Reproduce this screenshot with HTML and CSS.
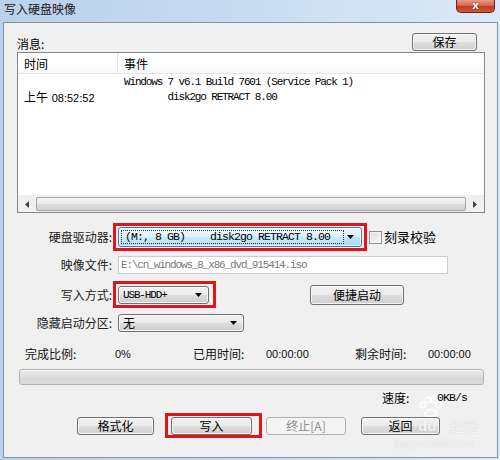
FILE: index.html
```html
<!DOCTYPE html>
<html>
<head>
<meta charset="utf-8">
<title>写入硬盘映像</title>
<link rel="stylesheet" href="styles.css">
</head>
<body>
<div class="titlebar">
  <div class="title">写入硬盘映像</div>
  <div class="close"><span>x</span></div>
</div>
<div class="client">
  <div class="msg-row">
    <span class="lbl">消息:</span>
    <div class="btn save">保存</div>
  </div>
  <div class="listview">
    <div class="lv-head">
      <div class="c1">时间</div>
      <div class="c2">事件</div>
    </div>
    <div class="lv-body">
      <div class="lv-row"><span class="c1"></span><span class="c2 mono">Windows 7 v6.1 Build 7601 (Service Pack 1)</span></div>
      <div class="lv-row"><span class="c1">上午 <span class="tah">08:52:52</span></span><span class="c2 mono">        disk2go RETRACT 8.00</span></div>
    </div>
    <div class="hscroll">
      <div class="sb-arrow"><svg width="5" height="7" viewBox="0 0 5 7"><polygon points="5,0 5,7 1,3.5" fill="#404040"/></svg></div>
      <div class="sb-thumb"></div>
      <div class="sb-arrow"><svg width="5" height="7" viewBox="0 0 5 7"><polygon points="0,0 0,7 4,3.5" fill="#404040"/></svg></div>
    </div>
  </div>

  <div class="frow r1">
    <span class="flabel">硬盘驱动器:</span>
    <div class="hl hl-a">
      <div class="combo focus w-drive">
        <div class="focusrect mono12"><span>(M:, 8 GB)</span><span class="gap">disk2go RETRACT 8.00</span></div>
        <svg class="arr" width="7" height="4" viewBox="0 0 7 4"><polygon points="0,0 7,0 3.5,4" fill="#000"/></svg>
      </div>
    </div>
    <span class="chk"></span><span class="chk-lbl">刻录校验</span>
  </div>

  <div class="frow r2">
    <span class="flabel">映像文件:</span>
    <div class="input mono">E:\cn_windows_8_x86_dvd_915414.iso</div>
  </div>

  <div class="frow r3">
    <span class="flabel">写入方式:</span>
    <div class="hl hl-b">
      <div class="combo w-mode"><span class="mono">USB-HDD+</span>
        <svg class="arr" width="7" height="4" viewBox="0 0 7 4"><polygon points="0,0 7,0 3.5,4" fill="#000"/></svg>
      </div>
    </div>
    <div class="btn quick">便捷启动</div>
  </div>

  <div class="frow r4">
    <span class="flabel">隐藏启动分区:</span>
    <div class="combo w-hide"><span>无</span>
      <svg class="arr" width="7" height="4" viewBox="0 0 7 4"><polygon points="0,0 7,0 3.5,4" fill="#000"/></svg>
    </div>
  </div>

  <div class="stats">
    <span>完成比例:</span>
    <span class="tah">0%</span>
    <span>已用时间:</span>
    <span class="tah">00:00:00</span>
    <span>剩余时间:</span>
    <span class="tah">00:00:00</span>
  </div>

  <div class="progress"></div>

  <div class="speed">
    <span>速度:</span>
    <span class="mono12">0KB/s</span>
  </div>

  <div class="buttons">
    <div class="btn b-format">格式化</div>
    <div class="hl hl-c"><div class="btn b-write">写入</div></div>
    <div class="btn b-stop disabled">终止[A]</div>
    <div class="btn b-back">返回</div>
  </div>
</div>

<div class="watermark">
  <svg class="wm-paw" width="26" height="22" viewBox="0 0 26 22">
    <g fill="none" stroke="rgba(255,255,255,0.9)" stroke-width="1.5">
      <ellipse cx="5" cy="9" rx="2.5" ry="3"/>
      <ellipse cx="10" cy="4" rx="2.5" ry="3"/>
      <ellipse cx="16" cy="4" rx="2.5" ry="3"/>
      <ellipse cx="21" cy="9" rx="2.5" ry="3"/>
      <path d="M7 18 C8 12 18 12 19 18 C19 21 7 21 7 18 Z"/>
    </g>
  </svg>
  <div class="wm-top"><span class="wm-du">du</span><span class="wm-jy">经验</span></div>
  <div class="wm-url">jingyan.baidu.com</div>
</div>
</body>
</html>
```

FILE: styles.css
```css
html, body {
  margin: 0;
  padding: 0;
}
body {
  width: 500px;
  height: 460px;
  overflow: hidden;
  position: relative;
  background: linear-gradient(to right, #b9d1ea 0%, #c9dcf0 50%, #dce9f6 100%);
  font-family: "Noto Sans CJK SC", "Liberation Sans", sans-serif;
  font-size: 12px;
  color: #000;
}

.titlebar {
  height: 22px;
  display: flex;
  justify-content: space-between;
  align-items: flex-start;
}
.title {
  padding: 2px 0 0 4px;
  font-size: 12px;
  line-height: 14px;
  color: #1a1a1a;
}
.close {
  width: 39px;
  height: 13px;
  margin-right: 5px;
  box-sizing: border-box;
  border: 1px solid #6b2518;
  border-top: none;
  border-radius: 0 0 5px 5px;
  background: linear-gradient(#e89a86 0%, #d9664d 45%, #c63a22 55%, #cc5a3c 100%);
  display: flex;
  justify-content: center;
  align-items: center;
}
.close span {
  font-family: "DejaVu Sans", sans-serif;
  font-weight: bold;
  font-size: 11px;
  line-height: 11px;
  color: #fff;
  text-shadow: 0 0 1px #5a1a10, 0 0 1px #5a1a10;
  margin-top: -1px;
}

.client {
  margin-left: 3px;
  width: 495px;
  height: 436px;
  box-sizing: border-box;
  border: 1px solid #8294a8;
  background: #f0f0f0;
}

.mono {
  font-family: "Liberation Mono", monospace;
  font-size: 11px;
  letter-spacing: -1.15px;
  white-space: pre;
}
.mono12 {
  font-family: "Liberation Mono", monospace;
  font-size: 11.5px;
  letter-spacing: -0.9px;
  white-space: pre;
}
.tah {
  font-family: "Liberation Sans", sans-serif;
  font-size: 11px;
}

.msg-row {
  display: flex;
  justify-content: space-between;
  align-items: flex-end;
  margin: 10px 20px 1px 13px;
  height: 18px;
}
.lbl {
  line-height: 14px;
}

.btn {
  box-sizing: border-box;
  height: 18px;
  border: 1px solid #707070;
  border-radius: 3px;
  background: linear-gradient(#f2f2f2 0%, #ebebeb 48%, #dddddd 52%, #cfcfcf 100%);
  box-shadow: inset 0 0 0 1px rgba(255, 255, 255, 0.75);
  display: flex;
  justify-content: center;
  align-items: center;
  font-size: 12px;
  line-height: 14px;
  color: #000;
}
.save { width: 65px; }

.listview {
  margin-left: 13px;
  width: 468px;
  height: 161px;
  box-sizing: border-box;
  border: 1px solid #828790;
  background: #fff;
  display: flex;
  flex-direction: column;
}
.lv-head {
  display: flex;
  height: 21px;
  box-sizing: border-box;
  border-bottom: 1px solid #e5e5e5;
  background: linear-gradient(#ffffff 0%, #ffffff 50%, #f7f8fa 100%);
  align-items: stretch;
}
.lv-head .c1 {
  width: 100px;
  box-sizing: border-box;
  padding-left: 6px;
  border-right: 1px solid #e5e5e5;
  display: flex;
  align-items: center;
}
.lv-head .c2 {
  padding-left: 6px;
  display: flex;
  align-items: center;
}
.lv-body {
  flex: 1;
  padding-top: 1px;
}
.lv-row {
  display: flex;
  height: 15px;
  align-items: center;
}
.lv-row .c1 {
  width: 100px;
  box-sizing: border-box;
  padding-left: 6px;
  line-height: 15px;
}
.lv-row .c1 .tah { margin-left: 1px; }
.lv-row .c2 {
  padding-left: 6px;
  line-height: 15px;
}

.hscroll {
  height: 16px;
  display: flex;
  align-items: center;
  background: #f0f0f0;
  border-top: 1px solid #f0f0f0;
}
.sb-arrow {
  width: 17px;
  height: 16px;
  display: flex;
  justify-content: center;
  align-items: center;
}
.sb-thumb {
  flex: 1;
  height: 14px;
  margin: 0 1px;
  box-sizing: border-box;
  border: 1px solid #a6a6a6;
  border-radius: 2px;
  background: linear-gradient(to bottom, #f4f4f4 0%, #e9e9e9 50%, #dadada 51%, #d4d4d4 100%);
}

.frow {
  display: flex;
  align-items: center;
}
.flabel {
  width: 108px;
  text-align: right;
  margin-right: 6px;
  color: #222;
  line-height: 14px;
  white-space: nowrap;
}
.r1 { margin-top: 14px; height: 20px; }
.r2 { margin-top: 9px; height: 18px; }
.r3 { margin-top: 11px; height: 20px; }
.r4 { margin-top: 9px; height: 18px; }

.hl { position: relative; }
.hl::after {
  content: "";
  position: absolute;
  border: 3px solid #e5121a;
  pointer-events: none;
}
.hl-a::after { top: -4px; bottom: -4px; left: -5px; right: -5px; }
.hl-b::after { top: -5px; bottom: -4px; left: -5px; right: -7px; }
.hl-c::after { top: -4px; bottom: -3px; left: -6px; right: -10px; }

.combo {
  box-sizing: border-box;
  height: 18px;
  border: 1px solid #707070;
  border-radius: 3px;
  background: linear-gradient(#f2f2f2 0%, #ebebeb 48%, #dddddd 52%, #cfcfcf 100%);
  box-shadow: inset 0 0 0 1px rgba(255, 255, 255, 0.75);
  display: flex;
  align-items: center;
  position: relative;
  padding-left: 4px;
  line-height: 14px;
}
.combo .arr {
  position: absolute;
  right: 6px;
  top: 50%;
  margin-top: -2px;
}
.combo.focus {
  height: 20px;
  border-color: #3c7fb1;
  background: linear-gradient(#eaf6fd 0%, #d9f0fc 48%, #bee6fd 52%, #a7d9f5 100%);
  padding-left: 2px;
}
.focusrect {
  height: 14px;
  width: 223px;
  border: 1px dotted #333;
  box-sizing: border-box;
  display: flex;
  align-items: center;
  padding-left: 3px;
  background: rgba(255, 255, 255, 0.15);
}
.focusrect .gap { margin-left: 25px; }
.w-drive { width: 244px; }
.w-drive .arr { right: 7px; }
.w-mode { width: 91px; }
.w-hide { width: 126px; }

.chk {
  width: 13px;
  height: 13px;
  box-sizing: border-box;
  border: 1px solid #8e8f8f;
  background: linear-gradient(135deg, #dcdcdc 0%, #fbfbfb 100%);
  box-shadow: inset 0 0 0 1px #f4f4f4;
  margin-left: 7px;
}
.chk-lbl {
  margin-left: 2px;
  font-size: 13px;
  line-height: 14px;
}

.input {
  width: 330px;
  height: 18px;
  box-sizing: border-box;
  border: 1px solid #c9ccd1;
  background: #fff;
  color: #7a7a7a;
  display: flex;
  align-items: center;
  padding-left: 2px;
}

.quick {
  margin-left: 101px;
  width: 94px;
  height: 20px;
}

.stats {
  margin-top: 15px;
  height: 14px;
  display: grid;
  grid-template-columns: 90px 78px 73px 89px 73px auto;
  padding-left: 21px;
  align-items: center;
  line-height: 14px;
  color: #111;
}
.stats .tah { font-size: 11px; }

.progress {
  margin: 8px 0 0 15px;
  width: 465px;
  height: 16px;
  box-sizing: border-box;
  border: 1px solid #b2b2b2;
  border-radius: 3px;
  background: linear-gradient(#eaeaea 0%, #e2e2e2 40%, #d6d6d6 60%, #dcdcdc 100%);
  box-shadow: inset 0 1px 0 #f6f6f6;
}

.speed {
  margin-top: 6px;
  height: 14px;
  display: flex;
  align-items: center;
  padding-left: 378px;
  line-height: 14px;
}
.speed span:first-child { width: 55px; }

.buttons {
  margin-top: 12px;
  display: flex;
  align-items: center;
  padding-left: 73px;
}
.b-format { width: 77px; }
.hl-c { margin-left: 17px; }
.b-write { width: 81px; }
.b-stop { margin-left: 14px; width: 80px; }
.b-back { margin-left: 15px; width: 79px; }
.btn.disabled {
  border-color: #adb2b5;
  background: #f4f4f4;
  box-shadow: none;
  color: #8d8d8d;
}

.watermark {
  position: absolute;
  left: 414px;
  top: 396px;
  width: 86px;
  color: rgba(255, 255, 255, 0.85);
  pointer-events: none;
  text-shadow: 0 0 1px rgba(150, 150, 150, 0.5);
}
.wm-paw {
  display: block;
  margin-left: 4px;
}
.wm-top {
  display: flex;
  align-items: center;
  height: 16px;
  margin-left: 4px;
}
.wm-du {
  font-family: "Liberation Sans", sans-serif;
  font-weight: bold;
  font-size: 15px;
  line-height: 16px;
}
.wm-jy {
  font-size: 14px;
  line-height: 16px;
  margin-left: 14px;
}
.wm-url {
  font-family: "Liberation Sans", sans-serif;
  font-size: 10px;
  line-height: 12px;
  margin: 4px 0 0 -20px;
}
```
